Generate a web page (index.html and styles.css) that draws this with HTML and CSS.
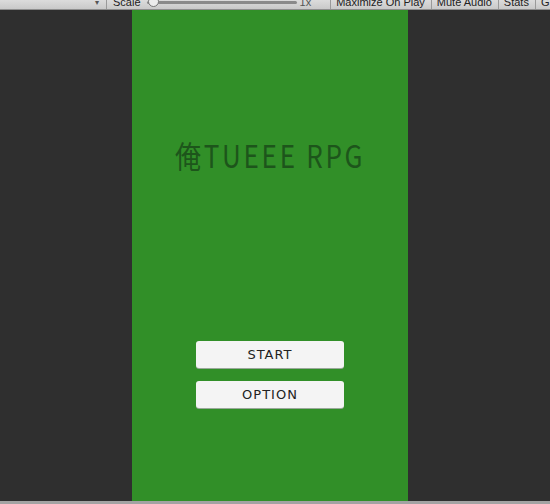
FILE: index.html
```html
<!DOCTYPE html>
<html lang="ja">
<head>
    <meta charset="UTF-8">
    <meta name="viewport" content="width=device-width, initial-scale=1.0">
    <title>俺TUEEE RPG</title>
    <link rel="stylesheet" href="styles.css">
</head>
<body>

    <div class="toolbar">
        <span class="arrow">&#9662;</span>
        <span class="sep"></span>
        <span class="label">Scale</span>
        <div class="slider"><span class="knob"></span></div>
        <span class="label scale-value">1x</span>
        <span class="sep"></span>
        <span class="label">Maximize On Play</span>
        <span class="sep"></span>
        <span class="label">Mute Audio</span>
        <span class="sep"></span>
        <span class="label">Stats</span>
        <span class="sep"></span>
        <span class="label">G</span>
    </div>

    <div class="viewport">
        <div class="screen">
            <h1 class="title">俺TUEEE RPG</h1>
            <div class="menu">
                <button class="menu-button">START</button>
                <button class="menu-button">OPTION</button>
            </div>
        </div>
    </div>

    <div class="statusbar"></div>

</body>
</html>
```

FILE: styles.css
```css
body {
    margin: 0;
    background-color: #2f2f2f;
    font-family: "DejaVu Sans", "Noto Sans CJK JP", sans-serif;
    height: 504px;
    overflow: hidden;
}
.toolbar {
    height: 10px;
    overflow: hidden;
    display: flex;
    align-items: flex-start;
    background: linear-gradient(#dcdcdc, #c9c9c9);
    border-bottom: 1px solid #8e8e8e;
    box-sizing: border-box;
    padding-left: 95px;
    color: #222;
    font-family: "Liberation Sans", Arial, sans-serif;
    font-size: 11px;
    line-height: 11px;
}
.toolbar > * {
    flex-shrink: 0;
}
.toolbar .label {
    margin-top: -3px;
    padding: 0 6px 0 5px;
    white-space: nowrap;
}
.toolbar .arrow {
    margin-top: -3px;
    width: 11px;
    font-size: 8px;
    color: #555;
}
.toolbar .sep {
    width: 1px;
    align-self: stretch;
    background-color: #9a9a9a;
}
.toolbar .label:nth-child(3) {
    padding-left: 6px;
}
.toolbar .scale-value {
    color: #555;
    padding-left: 3px;
    padding-right: 19px;
}
.slider {
    position: relative;
    width: 150px;
    height: 3px;
    margin-top: 1px;
    border-radius: 2px;
    background-color: #8a8a8a;
}
.knob {
    position: absolute;
    left: 1px;
    top: -5px;
    width: 9px;
    height: 9px;
    border-radius: 50%;
    background-color: #ececec;
    border: 1px solid #777;
}
.viewport {
    display: flex;
    height: 491px;
    padding-left: 132px;
}
.screen {
    width: 276px;
    background-color: #318f28;
    display: flex;
    flex-direction: column;
    align-items: center;
}
.title {
    margin: 122px 0 0 0;
    font-family: "Noto Sans CJK JP", sans-serif;
    font-weight: normal;
    font-size: 31px;
    letter-spacing: 3.2px;
    color: #1d551b;
    transform: scaleX(0.84);
}
.menu {
    margin-top: 164px;
    display: flex;
    flex-direction: column;
    gap: 13px;
}
.menu-button {
    width: 148px;
    height: 27px;
    border: none;
    border-radius: 3px;
    background-color: #f4f4f4;
    box-shadow: 0 1px 0 #9aa99a;
    font-family: "DejaVu Sans", sans-serif;
    font-size: 13px;
    letter-spacing: 1px;
    color: #222;
    padding: 0;
}
.statusbar {
    height: 3px;
    background-color: #a3a3a3;
}
```
